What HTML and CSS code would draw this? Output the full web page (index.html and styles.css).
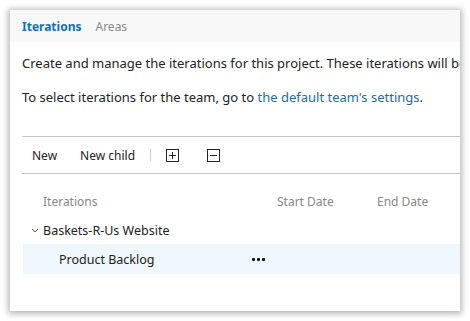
FILE: index.html
```html
<!DOCTYPE html>
<html>
<head>
<meta charset="utf-8">
<link rel="stylesheet" href="styles.css">
</head>
<body>
<div class="card">
  <div class="tabs">
    <span class="tab active">Iterations</span>
    <span class="tab">Areas</span>
  </div>
  <div class="body">
    <p class="desc">Create and manage the iterations for this project. These iterations will be used by teams.</p>
    <p class="desc second">To select iterations for the team, go to <a class="link">the default team's settings</a>.</p>
    <div class="toolbar">
      <span class="cmd">New</span>
      <span class="cmd">New child</span>
      <span class="sep"></span>
      <span class="box"><svg width="13" height="13" viewBox="0 0 13 13"><rect x="0.5" y="0.5" width="12" height="12" fill="none" stroke="#222" stroke-width="1"/><path d="M6.5 3v7M3 6.5h7" stroke="#222" stroke-width="1.1"/></svg></span>
      <span class="box"><svg width="13" height="13" viewBox="0 0 13 13"><rect x="0.5" y="0.5" width="12" height="12" fill="none" stroke="#222" stroke-width="1"/><path d="M3 6.5h7" stroke="#222" stroke-width="1.1"/></svg></span>
    </div>
    <div class="grid">
      <div class="row head">
        <span class="c-name">Iterations</span>
        <span class="c-start">Start Date</span>
        <span class="c-end">End Date</span>
      </div>
      <div class="row node">
        <span class="c-name"><svg class="chev" width="8" height="5" viewBox="0 0 8 5"><path d="M1 1l3 3 3-3" fill="none" stroke="#555" stroke-width="1"/></svg>Baskets-R-Us Website</span>
      </div>
      <div class="row child">
        <span class="c-name child-name">Product Backlog</span>
        <span class="more"><i></i><i></i><i></i></span>
      </div>
    </div>
  </div>
</div>
</body>
</html>
```

FILE: styles.css
```css
html, body {
  margin: 0;
  padding: 0;
  background: #fff;
  width: 470px;
  height: 321px;
  overflow: hidden;
}
body {
  font-family: "Noto Sans", "Open Sans", sans-serif;
  color: #222;
  padding: 10px 0 0 10px;
  box-sizing: border-box;
}
.card {
  width: 450px;
  height: 301px;
  background: #fff;
  box-shadow: 0 1px 6px 2px rgba(0,0,0,0.28);
  overflow: hidden;
}
.tabs {
  height: 32px;
  background: #f8f8f8;
  display: flex;
  align-items: center;
  padding-left: 12px;
  gap: 14px;
  font-size: 12px;
}
.tab {
  color: #888;
}
.tab.active {
  color: #106ebe;
  font-weight: 700;
}
.body {
  padding-left: 12px;
}
.desc {
  margin: 0;
  font-size: 13px;
  line-height: 20px;
  white-space: nowrap;
  padding-top: 11px;
  color: #222;
}
.desc.second {
  padding-top: 14px;
}
.link {
  color: #1e6aa8;
}
.toolbar {
  margin-top: 29px;
  border-top: 1px solid #c8c8c8;
  border-bottom: 1px solid #c8c8c8;
  height: 36px;
  display: flex;
  align-items: center;
  font-size: 12px;
  padding-left: 10px;
}
.cmd {
  margin-right: 23px;
}
.sep {
  width: 1px;
  height: 12px;
  background: #ccc;
  margin: 0 15px 0 -8px;
}
.box {
  display: flex;
  margin-right: 28px;
}
.grid {
  padding-top: 10px;
  font-size: 12.5px;
}
.row {
  display: flex;
  align-items: center;
  height: 30px;
}
.head {
  height: 34px;
  color: #888;
  font-size: 12px;
}
.row.node {
  height: 26px;
  margin-top: -1px;
  padding-bottom: 1px;
}
.c-name {
  width: 234px;
  padding-left: 21px;
  display: flex;
  align-items: center;
}
.c-start {
  width: 100px;
}
.chev {
  margin-left: -12px;
  margin-right: 4px;
}
.row.child {
  background: #eff6fc;
  margin-left: 1px;
}
.child-name {
  padding-left: 36px;
  width: 191px;
}
.more {
  display: flex;
  gap: 2px;
  margin-left: 2px;
}
.more i {
  width: 3px;
  height: 3px;
  background: #111;
  border-radius: 1px;
}
```
